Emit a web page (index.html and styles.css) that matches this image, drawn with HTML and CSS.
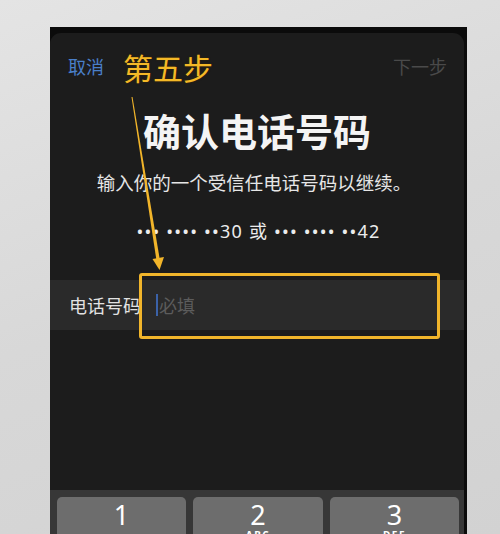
FILE: index.html
```html
<!DOCTYPE html>
<html lang="zh-CN">
<head>
<meta charset="utf-8">
<title>确认电话号码</title>
<link rel="stylesheet" href="styles.css">
</head>
<body>
<div class="stage">
  <div class="phone">
    <div class="sheet">
      <div class="nav">
        <span class="cancel">取消</span>
        <span class="next">下一步</span>
      </div>
      <h1 class="title">确认电话号码</h1>
      <p class="subtitle">输入你的一个受信任电话号码以继续。</p>
      <p class="masked">••• •••• ••30 或 ••• •••• ••42</p>
      <div class="field">
        <span class="label">电话号码</span>
        <span class="cursor"></span>
        <span class="placeholder">必填</span>
      </div>
      <div class="spacer"></div>
      <div class="keyboard">
        <div class="key"><span class="digit">1</span><span class="letters">&nbsp;</span></div>
        <div class="key"><span class="digit">2</span><span class="letters">ABC</span></div>
        <div class="key"><span class="digit">3</span><span class="letters">DEF</span></div>
      </div>
    </div>
  </div>
  <div class="step-label">第五步</div>
  <svg class="arrow" width="500" height="534" viewBox="0 0 500 534" aria-hidden="true">
    <polygon points="131.5,97 132.5,97 160.2,262 156.8,262.5" fill="#f2b52a"/>
    <polygon points="152.5,259 164,257 159.5,270" fill="#f2b52a"/>
  </svg>
  <div class="highlight"></div>
</div>
</body>
</html>
```

FILE: styles.css
```css
html, body {
  margin: 0;
  padding: 0;
}

body {
  width: 500px;
  height: 534px;
  overflow: hidden;
  background: linear-gradient(160deg, #e4e4e4 0%, #d8d8d8 50%, #d2d2d2 100%);
  font-family: "Noto Sans CJK SC", "Noto Sans", sans-serif;
}

.stage {
  position: relative;
  width: 500px;
  height: 534px;
  padding: 27px 0 0 50px;
  box-sizing: border-box;
}

.phone {
  width: 417px;
  height: 507px;
  background: #0b0b0b;
  padding: 6px 3px 0 0;
  box-sizing: border-box;
  overflow: hidden;
}

.sheet {
  height: 100%;
  background: #1c1c1c;
  border-radius: 11px 11px 0 0;
  display: flex;
  flex-direction: column;
  color: #ececec;
}

.nav {
  height: 34px;
  margin-top: 16px;
  padding: 0 17px 0 18px;
  display: flex;
  align-items: center;
  justify-content: space-between;
  font-size: 18px;
}

.cancel {
  color: #4a7fc9;
}

.next {
  color: #4a4a4a;
}

.title {
  margin: 27px 0 0;
  font-size: 38px;
  line-height: 40px;
  font-weight: 700;
  text-align: center;
  color: #f4f4f4;
}

.subtitle {
  margin: 19px 0 0;
  font-size: 18.5px;
  line-height: 26px;
  text-align: center;
  color: #e6e6e6;
  padding-right: 6px;
}

.masked {
  margin: 24px 0 0;
  font-family: "Noto Sans", "Noto Sans CJK SC", sans-serif;
  font-size: 18px;
  letter-spacing: 1.2px;
  line-height: 24px;
  text-align: center;
  color: #ececec;
  padding-left: 3px;
}

.field {
  margin-top: 37px;
  height: 50px;
  background: #2a2a2a;
  display: flex;
  align-items: center;
  padding-left: 19px;
  font-size: 18px;
}

.label {
  width: 87px;
  color: #e2e2e2;
}

.cursor {
  width: 2px;
  height: 22px;
  background: #3b62a8;
  margin-right: 1px;
}

.placeholder {
  color: #5c5c5c;
}

.spacer {
  flex: 1;
}

.keyboard {
  height: 44px;
  background: #373737;
  padding: 7px 7px 0;
  display: grid;
  grid-template-columns: 129px 130px 129px;
  column-gap: 7px;
  box-sizing: border-box;
  flex: none;
}

.key {
  height: 50px;
  background: #6d6d6d;
  border-radius: 5px;
  display: flex;
  flex-direction: column;
  align-items: center;
  color: #ffffff;
}

.digit {
  font-family: "Noto Sans", sans-serif;
  font-size: 27px;
  line-height: 26px;
  margin-top: 5px;
}

.letters {
  font-family: "Noto Sans", sans-serif;
  font-size: 10px;
  font-weight: 700;
  letter-spacing: 1.5px;
  line-height: 10px;
  margin-top: 2px;
}

.step-label {
  position: absolute;
  left: 123px;
  top: 47px;
  font-size: 30px;
  line-height: 40px;
  color: #f4b927;
  text-shadow: 0 0 2px #3a2a00;
}

.arrow {
  position: absolute;
  left: 0;
  top: 0;
  pointer-events: none;
}

.highlight {
  position: absolute;
  left: 139px;
  top: 273px;
  width: 301px;
  height: 66px;
  border: 3px solid #f1b52b;
  border-radius: 3px;
  box-sizing: border-box;
}
```
